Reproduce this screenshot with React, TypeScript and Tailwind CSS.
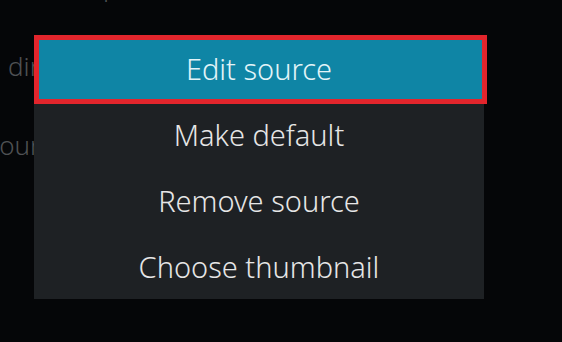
import React from "react";

const items = ["Edit source", "Make default", "Remove source", "Choose thumbnail"];

export default function App() {
  return (
    <div
      className="relative w-[562px] h-[342px] overflow-hidden bg-[#050608]"
      style={{ fontFamily: '"Noto Sans", "Open Sans", sans-serif' }}
    >
      {/* background list (partly hidden under the menu) */}
      <div className="flex flex-col text-[26px] leading-[80px] text-[#4f5154] font-light mt-[-54px]">
        <div className="pl-[50px]">Setup</div>
        <div className="pl-[8px]">directory</div>
        <div className="ml-[-13px] mt-[-1px]">sources</div>
      </div>

      {/* context menu */}
      <div className="absolute left-[34px] top-[35px] w-[450px] bg-[#1e2124] flex flex-col">
        {items.map((label, i) => (
          <div key={label} className="relative h-[66px] flex items-center justify-center">
            {i === 0 && (
              <div className="absolute left-0 top-0 w-[453px] h-[69px] border-[5px] border-[#e2252c] bg-[#0f85a5]" />
            )}
            <span
              className={
                "relative text-[29px] font-light leading-none " +
                (i === 0 ? "text-[#e2f4f8]" : "text-[#e6e6e6]")
              }
            >
              {label}
            </span>
          </div>
        ))}
      </div>
    </div>
  );
}
